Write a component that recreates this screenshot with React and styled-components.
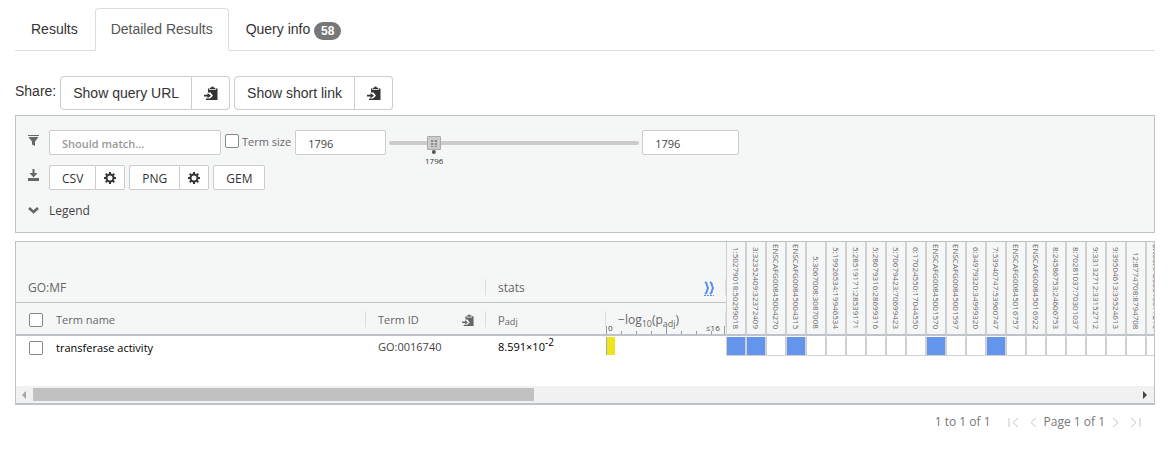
import React from "react";
import styled, { createGlobalStyle, css } from "styled-components";

const Global = createGlobalStyle`
  * { box-sizing: border-box; }
  body { margin: 0; background: #fff; color: #333; font: 14px/20px "Liberation Sans", Arial, sans-serif; }
  button, input { font: inherit; color: inherit; margin: 0; }
`;

const GRID_FONT = `"Open Sans", "Noto Sans", sans-serif`;

const Page = styled.main`padding: 8px 14px 24px 15px;`;

const Tabs = styled.nav`
  display: flex;
  gap: 1px;
  border-bottom: 1px solid #ddd;
`;
const Tab = styled.a`
  padding: 10px 15px;
  margin-bottom: -1px;
  border: 1px solid ${(p) => (p.$active ? "#ddd" : "transparent")};
  border-bottom-color: ${(p) => (p.$active ? "#fff" : "transparent")};
  border-radius: 4px 4px 0 0;
  color: ${(p) => (p.$active ? "#555" : "#333")};
  text-decoration: none;
`;
const Badge = styled.span`
  display: inline-block;
  padding: 3px 7px;
  border-radius: 10px;
  background: #777;
  color: #fff;
  font-size: 12px;
  font-weight: bold;
  line-height: 12px;
  vertical-align: -1px;
`;

const ShareRow = styled.div`
  display: flex;
  gap: 4px;
  margin-top: 25px;
`;
const ShareLabel = styled.span`padding-top: 5px;`;
const Group = styled.div`display: flex;`;
const Button = styled.button`
  display: flex;
  align-items: center;
  justify-content: center;
  background: #fff;
  border: 1px solid #ccc;
  ${(p) =>
    p.$small
      ? css`height: 25px; padding: 2px 12px 0; border-radius: 2px; font-family: ${GRID_FONT}; font-size: 12px; color: #333;`
      : css`height: 34px; padding: 0 12px; border-radius: 4px;`}
  ${Group} > &:not(:first-child) { border-left: 0; border-top-left-radius: 0; border-bottom-left-radius: 0; }
  ${Group} > &:not(:last-child) { border-top-right-radius: 0; border-bottom-right-radius: 0; }
`;
const IconButton = styled(Button)`
  padding: 0;
  width: ${(p) => (p.$small ? 29 : 38)}px;
`;

const Panel = styled.section`
  display: grid;
  row-gap: 10px;
  margin-top: 5px;
  padding: 14px 10px 9px;
  border: 1px solid #bdc3c7;
  background: #f5f7f7;
  color: #666;
  font: 12px/16px ${GRID_FONT};
`;
const PanelRow = styled.div`
  display: grid;
  grid-template-columns: 23px 1fr;
  min-height: 23px;
`;
const RowIcon = styled.span`padding: 4px 0 0 2px; line-height: 0;`;
const Controls = styled.div`display: flex; gap: ${(p) => p.$gap || 4}px; align-items: flex-start;`;
const TextBox = styled.input`
  width: ${(p) => p.$w}px;
  height: 25px;
  padding: 2px 12px 0;
  border: 1px solid #ccc;
  border-radius: 2px;
  background: #fff;
  color: #444;
  font-size: 11px;
  &::placeholder { color: #999; font-weight: 600; opacity: 1; }
`;
const Check = styled.input.attrs({ type: "checkbox" })`
  appearance: none;
  width: 14px;
  height: 14px;
  border: 1px solid #7f8c8d;
  border-radius: 2px;
  background: #fff;
  flex: none;
`;
const TermSize = styled.label`display: flex; gap: 3px; padding: 4px 1px 0; font-size: 11px;`;
const SliderBox = styled.div`
  position: relative;
  width: 250px;
  height: 25px;
`;
const Slider = styled.input.attrs({ type: "range" })`
  appearance: none;
  display: block;
  width: 100%;
  height: 25px;
  background: none;
  &::-webkit-slider-runnable-track { height: 4px; border-radius: 2px; background: #ccc; }
  &::-webkit-slider-thumb {
    appearance: none;
    width: 14px;
    height: 14px;
    margin-top: -5px;
    border: 1px solid #aaa;
    border-radius: 1px;
    background:
      repeating-linear-gradient(#ccc 0 1px, transparent 1px 3px) center / 6px 8px no-repeat,
      linear-gradient(90deg, #888 2px, #bbb 2px 4px, #888 4px) center / 6px 8px no-repeat,
      #ccc;
  }
`;
const SliderTip = styled.output`
  position: absolute;
  top: 20px;
  left: 45px;
  transform: translateX(-50%);
  color: #333;
  font-size: 8px;
  line-height: 9px;
  text-align: center;
  &::before {
    content: "";
    display: block;
    width: 4px;
    height: 4px;
    margin: 0 auto 2px;
    border-radius: 50%;
    background: #555;
  }
`;
const LegendButton = styled.button`
  justify-self: start;
  align-self: start;
  padding: 3px 0;
  border: 0;
  background: none;
  line-height: 16px;
  color: #444;
`;

const GridBox = styled.section`
  margin-top: 8px;
  border: 1px solid #bdc3c7;
  border-bottom-width: 2px;
  font: 12px/16px ${GRID_FONT};
`;
const Viewport = styled.div`
  overflow: hidden;
  padding-bottom: 30px;
`;
const Table = styled.table`
  table-layout: fixed;
  width: 100%;
  border-collapse: separate;
  border-spacing: 0;
  th, td { padding: 0; font-weight: normal; text-align: left; }
`;
const Head = styled.th`
  height: ${(p) => (p.$group ? 61 : 33)}px;
  border-bottom: ${(p) => (p.$group ? 1 : 2)}px solid #bdc3c7;
  background: linear-gradient(#ddd, #ddd) right bottom 7px / 1px 16px no-repeat, #f5f7f7;
  color: #666;
  font-size: ${(p) => (p.$group ? 12 : 11)}px;
  vertical-align: bottom;
`;
const HeadInner = styled.div`
  display: flex;
  align-items: center;
  justify-content: space-between;
  height: 30px;
  padding: 2px 12px 0;
`;
const Named = styled.label`display: flex; align-items: center; gap: 13px; padding-left: 1px;`;
const GeneHead = styled.th`
  height: 94px;
  border: 1px solid #d0d0d0;
  border-width: 0 1px;
  border-bottom: 2px solid #bdc3c7;
  background: #f5f7f7;
  color: #666;
  vertical-align: bottom;
`;
const GeneName = styled.span`
  display: block;
  height: 92px;
  width: 18px;
  padding-bottom: 5px;
  writing-mode: vertical-rl;
  text-align: right;
  white-space: nowrap;
  font-size: 8px;
  line-height: 18px;
`;
const Cell = styled.td`
  height: 20px;
  vertical-align: top;
  color: ${(p) => p.$color || "#000"};
  font-size: 11px;
`;
const CellInner = styled.div`
  padding: ${(p) => (p.$low ? 4 : 3)}px 12px 0;
  sup { font-size: 10px; line-height: 0; }
`;
const GeneCell = styled.td`
  height: 20px;
  border: 1px solid #d0d0d0;
  border-top-color: #fff;
  background: ${(p) => (p.$on ? "#6495ed" : "#fff")};
`;
const Bar = styled.div`
  width: 9px;
  height: 18px;
  margin-top: 1px;
  border-left: 1px solid #aaa;
  background: #f0e51d;
`;
const ScaleHead = styled.div`
  position: relative;
  height: 31px;
  font-size: 12px;
  sub { font-size: 9px; line-height: 0; }
`;
const ScaleTitle = styled.span`display: block; padding: 9px 0 0 12px;`;
const Axis = styled.svg`
  position: absolute;
  left: 0;
  bottom: 0;
  text { font: 8px ${GRID_FONT}; fill: #444; }
`;
const Expand = styled.a`color: #5a8dee; line-height: 0;`;

const ScrollBar = styled.div`
  display: flex;
  align-items: center;
  gap: 6px;
  height: 17px;
  padding: 0 6px;
  background: #f1f1f1;
`;
const Thumb = styled.div`
  width: calc(45% - 6px);
  height: 13px;
  background: #c1c1c1;
`;
const Arrow = styled.svg`margin-left: ${(p) => (p.$end ? "auto" : 0)};`;

const Pager = styled.footer`
  display: flex;
  align-items: center;
  justify-content: flex-end;
  padding: 9px 10px 0 0;
  color: #777;
  font: 12px/16px ${GRID_FONT};
`;
const RowCount = styled.span`margin-right: 13px;`;
const PageButton = styled.button`
  display: flex;
  justify-content: center;
  width: 20px;
  padding: 0;
  border: 0;
  background: none;
`;

const Paste = ({ size = 14 }) => (
  <svg width={size} height={size} viewBox="0 0 14 14" fill="currentColor" aria-hidden="true">
    <path d="M4 2.500h1.300v1.500h6.400V2.500H13.500V14H2v-1.500h4L9 9.800 6.500 6.500H4z" />
    <path d="M5.800 3.300V1.800h1.400a1.300 1.300 0 0 1 2.600 0h1.400v1.500z" />
    <path d="M0 8.800h3.500V7L7 9.800l-3.500 2.400v-1.700H0z" />
  </svg>
);
const Gear = () => (
  <svg width="12" height="12" viewBox="0 0 12 12" aria-hidden="true">
    <circle cx="6" cy="6" r="3.500" fill="none" stroke="#333" strokeWidth="2" />
    <g stroke="#333" strokeWidth="2">
      {[0, 45, 90, 135].map((a) => (
        <path key={a} d="M6 0v2M6 10v2" transform={`rotate(${a} 6 6)`} />
      ))}
    </g>
  </svg>
);
const Funnel = () => (
  <svg width="12" height="14" viewBox="0 0 12 14" fill="#666" aria-hidden="true">
    <path d="M0 1h11v1H0zM.5 3h10L7 7.500V12L4 10.500v-3z" />
  </svg>
);
const Download = () => (
  <svg width="12" height="13" viewBox="0 0 12 13" fill="#666" aria-hidden="true">
    <path d="M4.500 0h2v4H9.500L5.500 8.500 1.500 4h3zM0 9h11v3H0z" />
  </svg>
);
const Chevron = () => (
  <svg width="12" height="13" viewBox="0 1 12 13" fill="none" stroke="#666" strokeWidth="2.800" aria-hidden="true">
    <path d="M1 5l4.500 4L10 5" />
  </svg>
);
const pagePaths = {
  First: "M1 1v9M10 1L5 5.500L10 10",
  Previous: "M8 1L3 5.500L8 10",
  Next: "M3 1l5 4.500L3 10",
  Last: "M1 1l5 4.500L1 10M10 1v9",
};
const PageNav = ({ to }) => (
  <PageButton aria-label={`${to} page`}>
    <svg width="11" height="11" viewBox="0 0 11 11" fill="none" stroke="#c2c6c8">
      <path d={pagePaths[to]} />
    </svg>
  </PageButton>
);

const genes = [
  "1:50279018:50299018", "3:32352409:32372409", "ENSCAFG00845004270", "ENSCAFG00845004315",
  "5:3067008:3087008", "5:19926534:19946534", "5:28519171:28539171", "5:28679316:28699316",
  "5:70679423:70699423", "6:17024550:17044550", "ENSCAFG00845001570", "ENSCAFG00845001597",
  "6:34979320:34999320", "7:53940747:53960747", "ENSCAFG00845016757", "ENSCAFG00845016922",
  "8:24586753:24606753", "8:70281037:70301037", "9:33132712:33152712", "9:39504613:39524613",
  "12:8774708:8794708", "ENSCAFG00845017210",
];
const hits = new Set([0, 1, 3, 10, 13]);

export default function App() {
  return (
    <Page>
      <Global />
      <Tabs>
        <Tab href="#results">Results</Tab>
        <Tab href="#detailed" $active>Detailed Results</Tab>
        <Tab href="#query">Query info <Badge>58</Badge></Tab>
      </Tabs>

      <ShareRow>
        <ShareLabel>Share:</ShareLabel>
        <Group>
          <Button>Show query URL</Button>
          <IconButton aria-label="Copy query URL"><Paste /></IconButton>
        </Group>
        <Group>
          <Button>Show short link</Button>
          <IconButton aria-label="Copy short link"><Paste /></IconButton>
        </Group>
      </ShareRow>

      <Panel>
        <PanelRow>
          <RowIcon><Funnel /></RowIcon>
          <Controls $gap={3}>
            <TextBox $w={172} placeholder="Should match..." aria-label="Filter terms" />
            <TermSize><Check />Term size</TermSize>
            <TextBox $w={91} defaultValue="1796" aria-label="Minimum term size" />
            <SliderBox>
              <Slider min="0" max="100" defaultValue="16" aria-label="Term size range" />
              <SliderTip>1796</SliderTip>
            </SliderBox>
            <TextBox $w={97} defaultValue="1796" aria-label="Maximum term size" />
          </Controls>
        </PanelRow>
        <PanelRow>
          <RowIcon><Download /></RowIcon>
          <Controls>
            <Group>
              <Button $small>CSV</Button>
              <IconButton $small aria-label="CSV settings"><Gear /></IconButton>
            </Group>
            <Group>
              <Button $small>PNG</Button>
              <IconButton $small aria-label="PNG settings"><Gear /></IconButton>
            </Group>
            <Button $small>GEM</Button>
          </Controls>
        </PanelRow>
        <PanelRow>
          <RowIcon><Chevron /></RowIcon>
          <LegendButton>Legend</LegendButton>
        </PanelRow>
      </Panel>

      <GridBox>
        <Viewport>
          <Table>
            <colgroup>
              <col style={{ width: 350 }} />
              <col style={{ width: 120 }} />
              <col style={{ width: 120 }} />
              <col style={{ width: 120 }} />
              {genes.map((g) => <col key={g} style={{ width: 20 }} />)}
            </colgroup>
            <thead>
              <tr>
                <Head $group colSpan={2}><HeadInner>GO:MF</HeadInner></Head>
                <Head $group colSpan={2}>
                  <HeadInner>
                    stats
                    <Expand href="#expand" aria-label="Expand stats">
                      <svg width="10" height="15" viewBox="0 0 10 15" fill="none" stroke="currentColor" strokeWidth="2">
                        <path d="M1 1q2 1 2 3.500l1 2.500-1 2.500q0 2.500-2 3.500M6 1q2 1 2 3.500l1 2.500-1 2.500q0 2.500-2 3.500" />
                        <path d="M0 14.500h10" strokeWidth="1" strokeDasharray="2 1" />
                      </svg>
                    </Expand>
                  </HeadInner>
                </Head>
                {genes.map((g) => (
                  <GeneHead key={g} rowSpan={2}><GeneName>{g}</GeneName></GeneHead>
                ))}
              </tr>
              <tr>
                <Head><HeadInner><Named><Check />Term name</Named></HeadInner></Head>
                <Head><HeadInner>Term ID <Paste size={12} /></HeadInner></Head>
                <Head><HeadInner><span>p<sub>adj</sub></span></HeadInner></Head>
                <Head>
                  <ScaleHead>
                    <ScaleTitle>−log<sub>10</sub>(p<sub>adj</sub>)</ScaleTitle>
                    <Axis width="120" height="14" stroke="#999">
                      <path d="M.5 6v8M15.500 11v3M30.500 11v3M45.500 11v3M60.500 6v8M75.500 11v3M90.500 11v3M105.500 11v3M118.500 6v8" />
                      <text x="2" y="11" stroke="none">0</text>
                      <text x="100" y="11" stroke="none">≤16</text>
                    </Axis>
                  </ScaleHead>
                </Head>
              </tr>
            </thead>
            <tbody>
              <tr>
                <Cell><CellInner $low><Named><Check />transferase activity</Named></CellInner></Cell>
                <Cell $color="#444"><CellInner>GO:0016740</CellInner></Cell>
                <Cell><CellInner>8.591×10<sup>-2</sup></CellInner></Cell>
                <Cell><Bar /></Cell>
                {genes.map((g, i) => <GeneCell key={g} $on={hits.has(i)} />)}
              </tr>
            </tbody>
          </Table>
        </Viewport>
        <ScrollBar>
          <Arrow width="5" height="8" fill="#a3a3a3"><path d="M4 0v8L0 4z" /></Arrow>
          <Thumb />
          <Arrow $end width="5" height="8" fill="#444"><path d="M0 0v8l4-4z" /></Arrow>
        </ScrollBar>
      </GridBox>

      <Pager>
        <RowCount>1 to 1 of 1</RowCount>
        <PageNav to="First" />
        <PageNav to="Previous" />
        <span>Page 1 of 1</span>
        <PageNav to="Next" />
        <PageNav to="Last" />
      </Pager>
    </Page>
  );
}
